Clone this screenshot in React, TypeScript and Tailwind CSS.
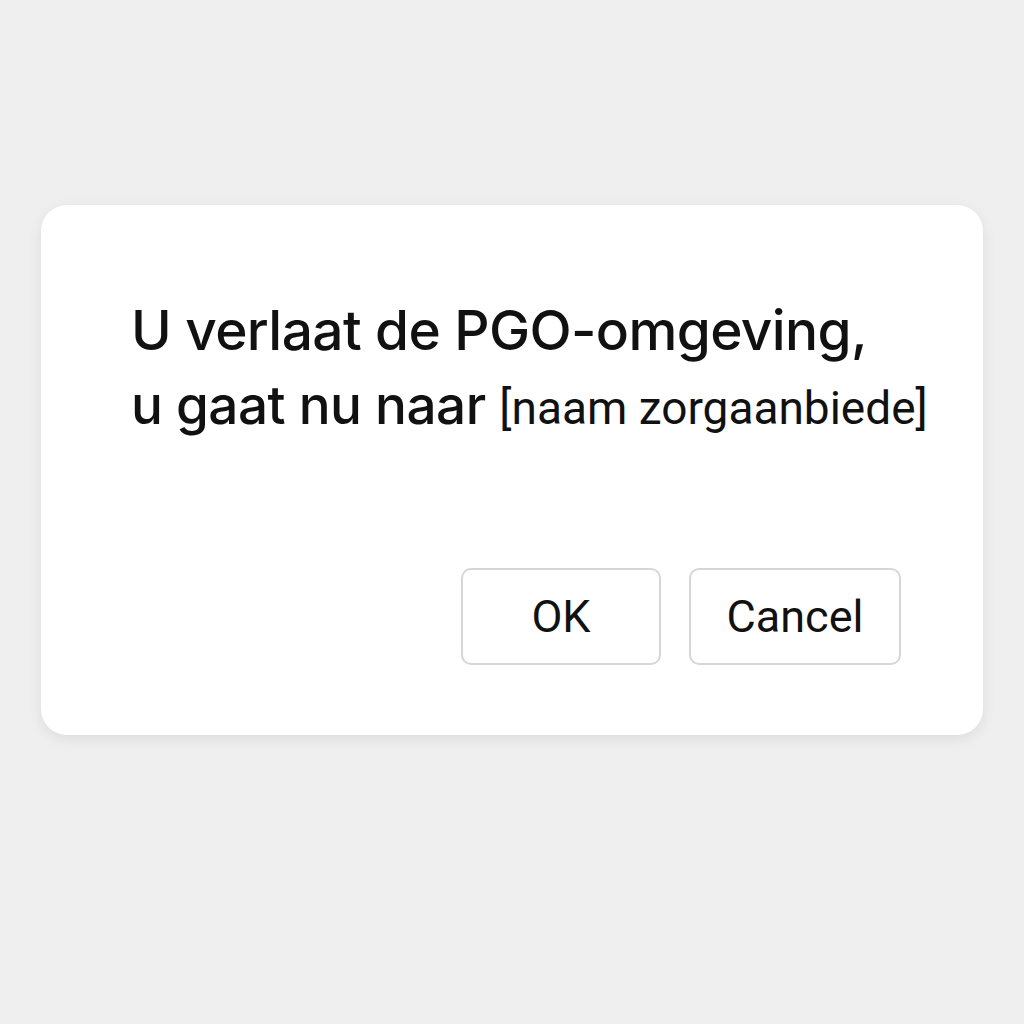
export default function App() {
  return (
    <div className="min-h-screen w-full bg-[#efefef] pt-[205px] px-[41px]">
      <div className="h-[530px] w-[942px] rounded-[26px] bg-white shadow-[0_4px_14px_rgba(0,0,0,0.08)] flex flex-col">
        <div className="pl-[90px] pt-[88px] text-[#111] font-['Inter','Noto_Sans',sans-serif] font-medium leading-[75px]">
          <div className="text-[55px] tracking-[-0.6px]">U verlaat de PGO-omgeving,</div>
          <div className="text-[53px] tracking-[-0.5px]">
            u gaat nu naar{" "}
            <span className="text-[46px] font-normal tracking-normal font-['Roboto','Inter',sans-serif]">[naam zorgaanbiede]</span>
          </div>
        </div>
        <div className="mt-auto mb-[70px] mr-[82px] flex justify-end gap-[28px] font-['Roboto','Inter',sans-serif] text-[45px] text-[#111]">
          <button className="h-[97px] w-[200px] rounded-[10px] border-2 border-[#d6d6d6] bg-white">OK</button>
          <button className="h-[97px] w-[212px] rounded-[10px] border-2 border-[#d6d6d6] bg-white">Cancel</button>
        </div>
      </div>
    </div>
  );
}
